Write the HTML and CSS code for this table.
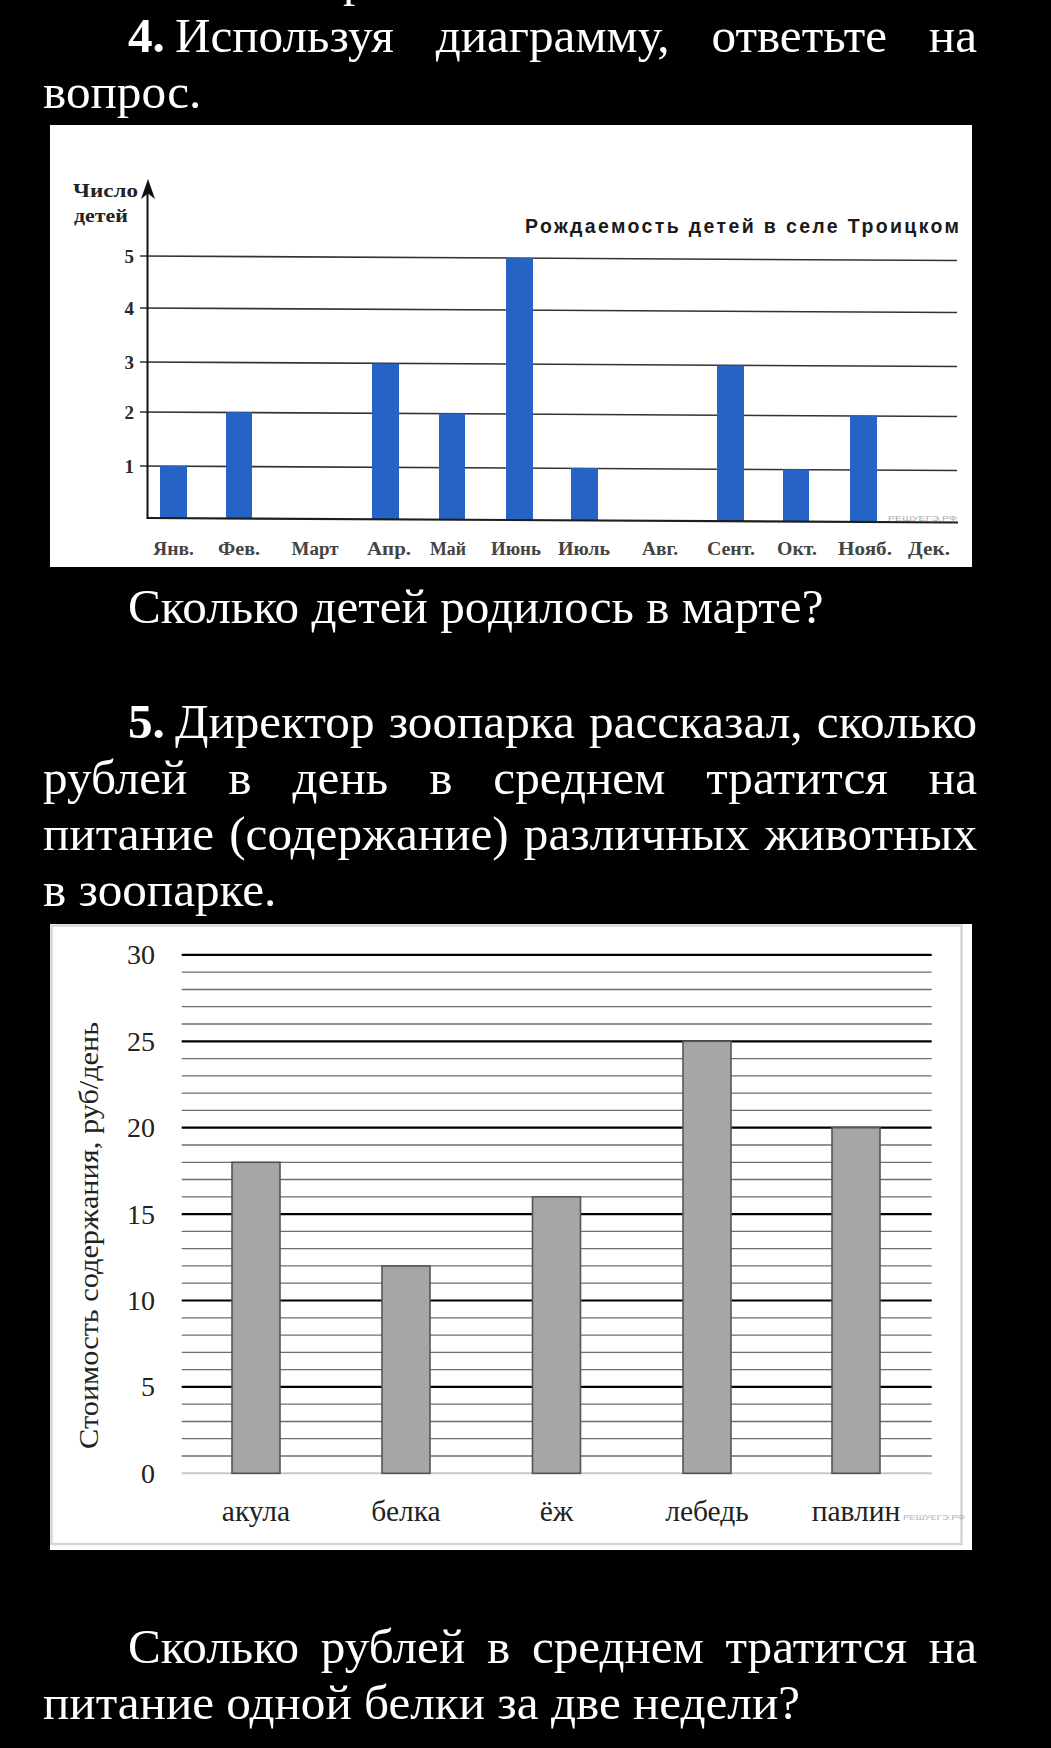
FILE: index.html
```html
<!DOCTYPE html>
<html lang="ru">
<head>
<meta charset="utf-8">
<title>Задания с диаграммами</title>
<link rel="stylesheet" href="styles.css">
</head>
<body>
<main class="page">
  <p class="cut">р</p>
  <p class="para"><b class="num">4.</b>Используя диаграмму, ответьте на вопрос.</p>

  <figure class="chart chart-births">
    <svg class="chart-svg" viewBox="0 0 922 442" width="922" height="442">
      <g class="grid1">
        <line x1="90" y1="131" x2="907" y2="135.5"/>
        <line x1="90" y1="183" x2="907" y2="187.5"/>
        <line x1="90" y1="237" x2="907" y2="241.5"/>
        <line x1="90" y1="287" x2="907" y2="291.5"/>
        <line x1="90" y1="341" x2="907" y2="345.5"/>
      </g>
      <g class="bars1">
        <rect x="110" y="340.9" width="27" height="52.2"/>
        <rect x="176" y="287.2" width="26" height="106.3"/>
        <rect x="322" y="238.6" width="27" height="155.7"/>
        <rect x="389" y="288.4" width="26" height="106.3"/>
        <rect x="456" y="133.1" width="27" height="262"/>
        <rect x="521" y="343.1" width="27" height="52.3"/>
        <rect x="667" y="240.5" width="27" height="155.7"/>
        <rect x="733" y="344.3" width="26" height="52.3"/>
        <rect x="800" y="290.7" width="27" height="106.3"/>
      </g>
      <line class="base1" x1="97" y1="393" x2="908" y2="397.5"/>
      <line class="axis1" x1="97.5" y1="66" x2="97.5" y2="394"/>
      <path class="arrow1" d="M98 54 L91 74 L98 68.5 L105 74 Z"/>

      <text class="t-axis" x="23" y="72" textLength="65" lengthAdjust="spacingAndGlyphs">Число</text>
      <text class="t-axis" x="24" y="97" textLength="54" lengthAdjust="spacingAndGlyphs">детей</text>

      <g class="t-tick">
        <text x="84" y="138">5</text>
        <text x="84" y="189.5">4</text>
        <text x="84" y="243.5">3</text>
        <text x="84" y="293.5">2</text>
        <text x="84" y="347.5">1</text>
      </g>

      <text class="t-title" x="475" y="108" textLength="434" lengthAdjust="spacing">Рождаемость детей в селе Троицком</text>

      <g class="t-month">
        <text x="123.5" y="430" textLength="41" lengthAdjust="spacingAndGlyphs">Янв.</text>
        <text x="189" y="430" textLength="42" lengthAdjust="spacingAndGlyphs">Фев.</text>
        <text x="265" y="430" textLength="47" lengthAdjust="spacingAndGlyphs">Март</text>
        <text x="339" y="430" textLength="44" lengthAdjust="spacingAndGlyphs">Апр.</text>
        <text x="398" y="430" textLength="36" lengthAdjust="spacingAndGlyphs">Май</text>
        <text x="466" y="430" textLength="50" lengthAdjust="spacingAndGlyphs">Июнь</text>
        <text x="534" y="430" textLength="52" lengthAdjust="spacingAndGlyphs">Июль</text>
        <text x="610" y="430" textLength="36" lengthAdjust="spacingAndGlyphs">Авг.</text>
        <text x="681" y="430" textLength="48" lengthAdjust="spacingAndGlyphs">Сент.</text>
        <text x="747" y="430" textLength="40" lengthAdjust="spacingAndGlyphs">Окт.</text>
        <text x="815" y="430" textLength="54" lengthAdjust="spacingAndGlyphs">Нояб.</text>
        <text x="879" y="430" textLength="42" lengthAdjust="spacingAndGlyphs">Дек.</text>
      </g>
      <text class="t-wm" x="838" y="396" textLength="69" lengthAdjust="spacingAndGlyphs">РЕШУЕГЭ.РФ</text>
    </svg>
  </figure>

  <p class="para q1">Сколько детей родилось в марте?</p>

  <p class="para p5"><b class="num">5.</b>Директор зоопарка рассказал, сколько рублей в день в среднем тратится на питание (содержание) различных животных в зоопарке.</p>

  <figure class="chart chart-zoo">
    <svg class="chart-svg" viewBox="0 0 922 626" width="922" height="626">
      <rect class="frame2" x="1.5" y="1.5" width="910" height="618.5"/>
      <g class="minor2">
        <line x1="131.7" y1="532.0" x2="881.7" y2="532.0"/>
        <line x1="131.7" y1="514.7" x2="881.7" y2="514.7"/>
        <line x1="131.7" y1="497.5" x2="881.7" y2="497.5"/>
        <line x1="131.7" y1="480.2" x2="881.7" y2="480.2"/>
        <line x1="131.7" y1="445.6" x2="881.7" y2="445.6"/>
        <line x1="131.7" y1="428.3" x2="881.7" y2="428.3"/>
        <line x1="131.7" y1="411.1" x2="881.7" y2="411.1"/>
        <line x1="131.7" y1="393.8" x2="881.7" y2="393.8"/>
        <line x1="131.7" y1="359.2" x2="881.7" y2="359.2"/>
        <line x1="131.7" y1="341.9" x2="881.7" y2="341.9"/>
        <line x1="131.7" y1="324.7" x2="881.7" y2="324.7"/>
        <line x1="131.7" y1="307.4" x2="881.7" y2="307.4"/>
        <line x1="131.7" y1="272.8" x2="881.7" y2="272.8"/>
        <line x1="131.7" y1="255.5" x2="881.7" y2="255.5"/>
        <line x1="131.7" y1="238.3" x2="881.7" y2="238.3"/>
        <line x1="131.7" y1="221.0" x2="881.7" y2="221.0"/>
        <line x1="131.7" y1="186.4" x2="881.7" y2="186.4"/>
        <line x1="131.7" y1="169.1" x2="881.7" y2="169.1"/>
        <line x1="131.7" y1="151.9" x2="881.7" y2="151.9"/>
        <line x1="131.7" y1="134.6" x2="881.7" y2="134.6"/>
        <line x1="131.7" y1="100.0" x2="881.7" y2="100.0"/>
        <line x1="131.7" y1="82.7" x2="881.7" y2="82.7"/>
        <line x1="131.7" y1="65.5" x2="881.7" y2="65.5"/>
        <line x1="131.7" y1="48.2" x2="881.7" y2="48.2"/>
      </g>
      <g class="major2">
        <line x1="131.7" y1="462.9" x2="881.7" y2="462.9"/>
        <line x1="131.7" y1="376.5" x2="881.7" y2="376.5"/>
        <line x1="131.7" y1="290.1" x2="881.7" y2="290.1"/>
        <line x1="131.7" y1="203.7" x2="881.7" y2="203.7"/>
        <line x1="131.7" y1="117.3" x2="881.7" y2="117.3"/>
        <line x1="131.7" y1="30.9" x2="881.7" y2="30.9"/>
      </g>
      <line class="zero2" x1="131.7" y1="549.3" x2="881.7" y2="549.3"/>
      <g class="bars2">
        <rect x="182" y="238.3" width="48" height="311"/>
        <rect x="332" y="341.9" width="48" height="207.4"/>
        <rect x="482.5" y="272.8" width="48" height="276.5"/>
        <rect x="633" y="117.3" width="48" height="432"/>
        <rect x="782" y="203.7" width="48" height="345.6"/>
      </g>
      <g class="t-ytick">
        <text x="105" y="559">0</text>
        <text x="105" y="472.4">5</text>
        <text x="105" y="386">10</text>
        <text x="105" y="299.6">15</text>
        <text x="105" y="213.2">20</text>
        <text x="105" y="126.8">25</text>
        <text x="105" y="40.4">30</text>
      </g>
      <text class="t-ytitle" transform="translate(48 311.4) rotate(-90)" textLength="427" lengthAdjust="spacingAndGlyphs">Стоимость содержания, руб/день</text>
      <g class="t-xlab">
        <text x="206" y="597">акула</text>
        <text x="356" y="597">белка</text>
        <text x="506.5" y="597">ёж</text>
        <text x="657" y="597">лебедь</text>
        <text x="806" y="597">павлин</text>
      </g>
      <text class="t-wm2" x="853" y="596" textLength="62" lengthAdjust="spacingAndGlyphs">РЕШУЕГЭ.РФ</text>
    </svg>
  </figure>

  <p class="para q2">Сколько рублей в среднем тратится на питание одной белки за две недели?</p>
</main>
</body>
</html>
```

FILE: styles.css
```css
html, body {
  margin: 0;
  padding: 0;
  background: #000;
}

.page {
  padding: 0 74px 0 43px;
  font-family: "Liberation Serif", "Times New Roman", serif;
  font-size: 49.2px;
  line-height: 56px;
  color: #fff;
}

.cut {
  margin: -48px 0 0;
  padding-left: 300px;
}

.para {
  margin: 0;
  text-align: justify;
  text-indent: 85px;
}

.num {
  display: inline-block;
  text-indent: 0;
  margin-right: 10px;
  font-weight: bold;
}

.chart {
  display: block;
  width: 922px;
  margin: 5px 0 0 7px;
  padding: 0;
  background: #fff;
}

.chart-zoo {
  margin-top: 6px;
}

.chart-svg {
  display: block;
}

.q1 { margin-top: 12px; }
.p5 { margin-top: 59px; }
.q2 { margin-top: 69px; }

/* chart 1: births */
.grid1 line {
  stroke: #333;
  stroke-width: 1.6;
}
.base1 {
  stroke: #1e1e1e;
  stroke-width: 2.2;
}
.axis1 {
  stroke: #111;
  stroke-width: 2;
}
.arrow1 {
  fill: #111;
}
.bars1 rect {
  fill: #2663c4;
}
.t-axis {
  font-family: "Liberation Serif", serif;
  font-weight: bold;
  font-size: 19px;
  fill: #222;
}
.t-tick text {
  font-family: "Liberation Serif", serif;
  font-weight: bold;
  font-size: 19px;
  fill: #2a2a2a;
  text-anchor: end;
}
.t-title {
  font-family: "Liberation Sans", Arial, sans-serif;
  font-weight: bold;
  font-size: 19.5px;
  fill: #1a1a1a;
}
.t-month text {
  font-family: "Liberation Serif", serif;
  font-weight: bold;
  font-size: 18px;
  fill: #444;
  text-anchor: middle;
}
.t-wm {
  font-family: "Liberation Sans", Arial, sans-serif;
  font-size: 8px;
  fill: #aaa;
}

/* chart 2: zoo */
.frame2 {
  fill: none;
  stroke: #d6d6d6;
  stroke-width: 2.5;
}
.minor2 line {
  stroke: #6e6e6e;
  stroke-width: 1.3;
}
.major2 line {
  stroke: #000;
  stroke-width: 2.2;
}
.zero2 {
  stroke: #c8c8c8;
  stroke-width: 2;
}
.bars2 rect {
  fill: #a6a6a6;
  stroke: #555;
  stroke-width: 1.6;
}
.t-ytick text {
  font-family: "Liberation Serif", serif;
  font-size: 28px;
  fill: #222;
  text-anchor: end;
}
.t-ytitle {
  font-family: "Liberation Serif", serif;
  font-size: 28px;
  fill: #222;
  text-anchor: middle;
}
.t-xlab text {
  font-family: "Liberation Serif", serif;
  font-size: 29.5px;
  fill: #222;
  text-anchor: middle;
}
.t-wm2 {
  font-family: "Liberation Sans", Arial, sans-serif;
  font-size: 7px;
  fill: #b0b0b0;
}
```
